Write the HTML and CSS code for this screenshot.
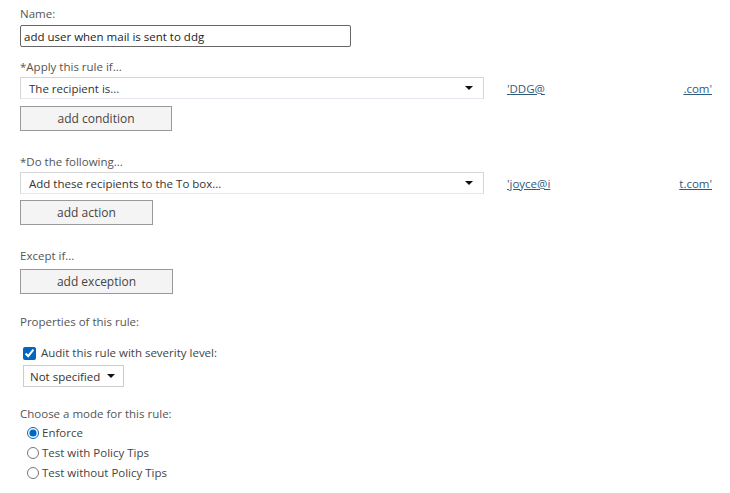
FILE: index.html
```html
<!DOCTYPE html>
<html lang="en">
<head>
    <meta charset="UTF-8">
    <title>New rule</title>
    <link rel="stylesheet" href="styles.css">
</head>
<body>
    <div class="rule-form">
        <div class="label">Name:</div>
        <input class="name-input" type="text" value="add user when mail is sent to ddg">

        <div class="label section">*Apply this rule if...</div>
        <div class="select-row">
            <div class="dropdown wide">
                <span>The recipient is...</span>
                <span class="caret"></span>
            </div>
            <div class="value-link">
                <a href="#">'DDG@</a>
                <a href="#" class="tail">.com'</a>
            </div>
        </div>
        <button class="add-btn">add condition</button>

        <div class="label section">*Do the following...</div>
        <div class="select-row">
            <div class="dropdown wide">
                <span>Add these recipients to the To box...</span>
                <span class="caret"></span>
            </div>
            <div class="value-link">
                <a href="#">'joyce@i</a>
                <a href="#" class="tail second">t.com'</a>
            </div>
        </div>
        <button class="add-btn narrow">add action</button>

        <div class="label section except-label">Except if...</div>
        <button class="add-btn except">add exception</button>

        <div class="label props">Properties of this rule:</div>
        <label class="check-row">
            <input type="checkbox" checked>
            <span>Audit this rule with severity level:</span>
        </label>
        <div class="dropdown severity">
            <span>Not specified</span>
            <span class="caret"></span>
        </div>

        <div class="label mode">Choose a mode for this rule:</div>
        <div class="radio-group">
            <label class="radio-row"><input type="radio" name="mode" checked> Enforce</label>
            <label class="radio-row"><input type="radio" name="mode"> Test with Policy Tips</label>
            <label class="radio-row"><input type="radio" name="mode"> Test without Policy Tips</label>
        </div>
    </div>
</body>
</html>
```

FILE: styles.css
```css
body {
    margin: 0;
    background: #fff;
    font-family: "Open Sans", "Noto Sans", sans-serif;
    font-size: 11.5px;
    color: #444;
}
.rule-form {
    padding: 6px 0 0 20px;
    display: flex;
    flex-direction: column;
    align-items: flex-start;
}
.label {
    line-height: 16px;
    color: #555;
}
.section {
    margin-top: 12px;
}
.name-input {
    margin-top: 3px;
    width: 331px;
    height: 22px;
    box-sizing: border-box;
    border: 1px solid #666;
    border-radius: 2px;
    padding: 0 3px;
    font-family: inherit;
    font-size: 11.5px;
    color: #222;
    outline: none;
}
.select-row {
    display: flex;
    align-items: center;
    margin-top: 2px;
}
.dropdown {
    display: flex;
    align-items: center;
    justify-content: space-between;
    box-sizing: border-box;
    height: 22px;
    padding: 0 8px;
    border: 1px solid #d6d6d6;
    border-bottom-color: #e3e8ee;
    color: #333;
    background: #fff;
}
.wide {
    width: 464px;
}
.caret {
    width: 0;
    height: 0;
    border-left: 4px solid transparent;
    border-right: 4px solid transparent;
    border-top: 4px solid #111;
    margin-right: 2px;
}
.value-link {
    display: flex;
    width: 205px;
    margin-left: 23px;
    justify-content: space-between;
}
.value-link a {
    color: #2f5b7c;
    text-decoration: underline;
}
.add-btn {
    margin-top: 7px;
    width: 152px;
    height: 25px;
    border: 1px solid #999;
    background: #f4f4f4;
    font-family: inherit;
    font-size: 12px;
    color: #444;
    padding: 0;
}
.narrow {
    width: 133px;
    margin-top: 6px;
}
.except {
    width: 153px;
    margin-top: 5px;
}
.add-btn + .section {
    margin-top: 23px;
}
.add-btn + .except-label {
    margin-top: 23px;
}
.props {
    margin-top: 20px;
}
.check-row {
    display: flex;
    align-items: center;
    margin: 15px 0 0 3px;
    line-height: 16px;
}
.check-row input {
    margin: 0 5px 0 0;
    width: 13px;
    height: 13px;
    accent-color: #0067c0;
}
.severity {
    margin: 4px 0 0 3px;
    width: 101px;
    padding: 0 6px;
    border-color: #ccc;
}
.mode {
    margin-top: 19px;
}
.radio-group {
    margin: 3px 0 0 7px;
    display: flex;
    flex-direction: column;
    gap: 4px;
}
.radio-row {
    display: flex;
    align-items: center;
    line-height: 16px;
}
.radio-row input {
    margin: 0 3px 0 0;
    width: 12px;
    height: 12px;
    accent-color: #0067c0;
}
```
